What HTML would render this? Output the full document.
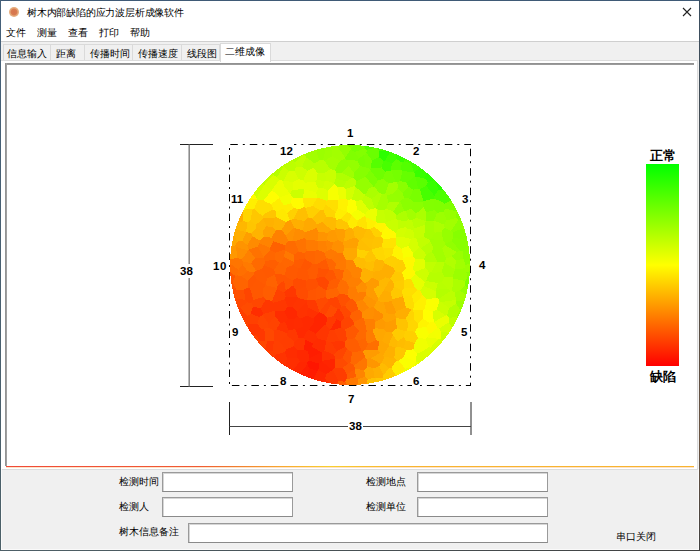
<!DOCTYPE html>
<html><head><meta charset="utf-8">
<style>
html,body{margin:0;padding:0;}
body{width:700px;height:551px;position:relative;overflow:hidden;background:#f0f0f0;font-family:"Liberation Sans",sans-serif;color:#000;}
.a{position:absolute;white-space:nowrap;}
.cj{font-size:10px;line-height:12px;}
.tab{position:absolute;top:44px;height:17px;background:#f0f0f0;border:1px solid #dadada;border-bottom:none;box-sizing:border-box;}
.inp{position:absolute;background:#fff;border:1px solid #9a9a9a;border-bottom-color:#8a8a8a;box-shadow:inset 1px 1px 0 #d6d6d6;box-sizing:border-box;height:20px;}
.num{position:absolute;font-weight:bold;font-size:11.5px;line-height:12px;white-space:nowrap;}
</style></head><body>
<div class="a" style="left:0;top:0;width:700px;height:41px;background:#fff;"></div>
<div class="a" style="left:9px;top:7px;width:10px;height:10px;border-radius:50%;background:radial-gradient(circle at 50% 50%,#d6744c 0,#d87a50 40%,#e4a878 55%,#e9b586 78%,#b88860 100%);"></div>
<div class="a cj" style="left:27px;top:7px;letter-spacing:-0.2px;">树木内部缺陷的应力波层析成像软件</div>
<svg class="a" style="left:682px;top:7px" width="10" height="10" viewBox="0 0 10 10"><path d="M1 1L9 9M9 1L1 9" stroke="#222" stroke-width="1.1"/></svg>
<div class="a cj" style="left:6px;top:27px;">文件</div>
<div class="a cj" style="left:37px;top:27px;">测量</div>
<div class="a cj" style="left:68px;top:27px;">查看</div>
<div class="a cj" style="left:99px;top:27px;">打印</div>
<div class="a cj" style="left:130px;top:27px;">帮助</div>
<div class="a" style="left:0;top:41px;width:700px;height:1px;background:#cfcfcf"></div>
<!-- tabs -->
<div class="tab" style="left:3px;width:48px;"></div>
<div class="tab" style="left:50px;width:35px;"></div>
<div class="tab" style="left:84px;width:49px;"></div>
<div class="tab" style="left:132px;width:50px;"></div>
<div class="tab" style="left:181px;width:39px;"></div>
<div class="a cj" style="left:7px;top:48px;">信息输入</div>
<div class="a cj" style="left:56px;top:48px;">距离</div>
<div class="a cj" style="left:90px;top:48px;">传播时间</div>
<div class="a cj" style="left:138px;top:48px;">传播速度</div>
<div class="a cj" style="left:187px;top:48px;">线段图</div>
<!-- tab page -->
<div class="a" style="left:1px;top:60px;width:697px;height:410px;background:#fff;border:1px solid #dcdcdc;border-left:none;box-sizing:border-box;"></div>
<div class="a" style="left:220px;top:43px;width:51px;height:19px;background:#fff;border:1px solid #dadada;border-bottom:none;box-sizing:border-box;"></div>
<div class="a cj" style="left:225px;top:46px;">二维成像</div>
<div class="a" style="left:5px;top:63px;width:689px;height:2px;background:linear-gradient(#8c8c8c,#a0a0a0);"></div>
<div class="a" style="left:5px;top:63px;width:2px;height:403px;background:linear-gradient(90deg,#8c8c8c,#a8a8a8);"></div>
<div class="a" style="left:6px;top:466px;width:688px;height:1px;background:linear-gradient(90deg,#f04a38 0%,#f05a34 28%,#f07a30 33%,#f8a830 40%,#f8d030 47%,#f8c030 52%,#f8b430 60%,#f8b430 100%);box-shadow:0 0.6px 0 rgba(248,150,48,.45);"></div>

<!-- chart -->
<svg class="a" style="left:0;top:0" width="700" height="551" viewBox="0 0 700 551">
<g shape-rendering="crispEdges">
<path fill="#8fff00" d="M323.8 149.7L324.8 147.7L323.7 147.9L320.8 148.6L319.8 148.9Z"/>
<path fill="#9eff00" d="M323.8 149.7L325.1 151.1L332.1 150.4L334.5 146.0L332.4 146.3L329.5 146.8L326.6 147.3L324.8 147.7Z"/>
<path fill="#94ff00" d="M345.2 157.6L350.6 149.9L350.6 148.4L347.1 145.0L347.1 145.0L344.1 145.1L341.2 145.3L338.2 145.6L336.7 145.8Z"/>
<path fill="#82ff00" d="M350.6 148.4L354.2 145.1L352.9 145.0L350.0 145.0L347.1 145.0Z"/>
<path fill="#77ff00" d="M365.4 148.5L364.0 145.8L361.8 145.6L358.8 145.3L355.9 145.1L354.2 145.1L350.6 148.4L350.6 149.9L354.8 151.9Z"/>
<path fill="#52ff00" d="M374.8 147.6L373.4 147.3L370.5 146.8L367.6 146.3L364.7 145.9L364.0 145.8L365.4 148.5L366.7 149.9Z"/>
<path fill="#47ff00" d="M379.4 151.1L385.9 150.5L384.8 150.2L382.0 149.3L379.2 148.6L376.7 148.0Z"/>
<path fill="#bbff00" d="M293.7 161.8L293.1 159.4L290.9 160.6L288.3 162.1Z"/>
<path fill="#adff00" d="M293.7 161.8L294.9 162.5L303.6 154.3L301.4 155.3L298.7 156.5L296.0 157.8L293.4 159.2L293.1 159.4Z"/>
<path fill="#a2ff00" d="M306.1 157.3L314.8 163.6L319.1 160.3L316.2 149.9L315.2 150.2L312.4 151.1L309.6 152.0L306.8 153.0L304.1 154.1Z"/>
<path fill="#9bff00" d="M319.1 160.3L323.0 160.2L325.1 151.1L323.8 149.7L319.8 148.9L318.0 149.3L316.2 149.9Z"/>
<path fill="#9fff00" d="M323.0 160.2L324.7 160.7L332.2 156.1L332.1 150.4L325.1 151.1Z"/>
<path fill="#a2ff00" d="M332.1 150.4L332.2 156.1L339.9 160.9L345.1 158.5L345.2 157.6L336.7 145.8L335.3 145.9L334.5 146.0Z"/>
<path fill="#80ff00" d="M346.9 160.0L357.6 160.7L358.8 158.5L354.8 151.9L350.6 149.9L345.2 157.6L345.1 158.5Z"/>
<path fill="#83ff00" d="M358.8 158.5L364.1 155.0L366.4 152.9L366.7 149.9L365.4 148.5L354.8 151.9Z"/>
<path fill="#6aff00" d="M379.0 157.2L379.4 151.1L376.7 148.0L376.3 147.9L374.8 147.6L366.7 149.9L366.4 152.9L372.0 160.4Z"/>
<path fill="#2cff00" d="M379.4 151.1L379.0 157.2L383.4 161.0L385.1 160.6L390.1 151.9L387.6 151.1L385.9 150.5Z"/>
<path fill="#40ff00" d="M396.7 159.3L395.4 153.9L393.2 153.0L390.4 152.0L390.1 151.9L385.1 160.6L391.6 163.3Z"/>
<path fill="#35ff00" d="M396.7 159.3L401.7 162.4L404.2 161.4L405.2 158.5L404.0 157.8L401.3 156.5L398.6 155.3L395.9 154.1L395.4 153.9Z"/>
<path fill="#49ff00" d="M404.2 161.4L410.7 163.2L411.6 162.0L409.1 160.6L406.6 159.2L405.2 158.5Z"/>
<path fill="#b5ff00" d="M283.3 165.2L283.3 165.2L280.9 166.9L278.5 168.6L276.2 170.4L273.9 172.2L272.5 173.4L273.8 175.2L277.1 177.0L283.6 166.2Z"/>
<path fill="#bcff00" d="M294.4 170.8L296.3 166.6L294.9 162.5L293.7 161.8L288.3 162.1L288.3 162.1L285.8 163.6L283.3 165.2L283.6 166.2L288.7 171.3Z"/>
<path fill="#c1ff00" d="M294.9 162.5L296.3 166.6L302.1 166.8L306.1 157.3L304.1 154.1L304.1 154.1L303.6 154.3Z"/>
<path fill="#b7ff00" d="M313.8 167.9L314.8 163.6L306.1 157.3L302.1 166.8L307.6 170.7Z"/>
<path fill="#b9ff00" d="M319.1 160.3L314.8 163.6L313.8 167.9L317.7 173.1L325.1 172.7L330.2 169.2L324.7 160.7L323.0 160.2Z"/>
<path fill="#a5ff00" d="M324.7 160.7L330.2 169.2L334.9 170.3L339.9 160.9L332.2 156.1Z"/>
<path fill="#92ff00" d="M339.9 160.9L334.9 170.3L336.4 172.9L341.8 173.1L348.4 165.9L346.9 160.0L345.1 158.5Z"/>
<path fill="#94ff00" d="M348.4 165.9L354.0 172.5L359.8 166.1L357.6 160.7L346.9 160.0Z"/>
<path fill="#7aff00" d="M359.8 166.1L365.5 167.3L364.1 155.0L358.8 158.5L357.6 160.7Z"/>
<path fill="#7dff00" d="M370.6 168.6L372.0 160.4L366.4 152.9L364.1 155.0L365.5 167.3L370.2 169.1Z"/>
<path fill="#55ff00" d="M381.5 167.4L383.4 161.0L379.0 157.2L372.0 160.4L370.6 168.6Z"/>
<path fill="#47ff00" d="M391.4 170.2L391.6 163.3L385.1 160.6L383.4 161.0L381.5 167.4L385.2 171.7L391.3 170.4Z"/>
<path fill="#5dff00" d="M401.7 162.4L396.7 159.3L391.6 163.3L391.4 170.2L401.2 169.5Z"/>
<path fill="#53ff00" d="M402.5 171.4L413.9 171.7L410.7 163.2L404.2 161.4L401.7 162.4L401.2 169.5Z"/>
<path fill="#43ff00" d="M420.4 167.8L419.1 166.9L416.7 165.2L414.2 163.6L411.7 162.1L411.6 162.0L410.7 163.2L413.9 171.7L414.3 172.0Z"/>
<path fill="#beff00" d="M264.5 184.6L265.4 183.0L265.2 180.1L265.1 180.1L263.1 182.3L262.0 183.4Z"/>
<path fill="#c4ff00" d="M272.5 173.4L271.6 174.1L269.4 176.1L267.3 178.1L265.2 180.1L265.4 183.0L273.8 175.2Z"/>
<path fill="#caff00" d="M283.6 180.5L288.7 171.3L283.6 166.2L277.1 177.0L279.4 179.9L283.0 180.8Z"/>
<path fill="#d8ff00" d="M292.7 182.1L298.3 179.1L294.4 170.8L288.7 171.3L283.6 180.5Z"/>
<path fill="#ceff00" d="M303.1 180.5L307.6 170.7L302.1 166.8L296.3 166.6L294.4 170.8L298.3 179.1Z"/>
<path fill="#dbff00" d="M304.7 182.7L315.2 181.8L316.8 179.6L317.7 173.1L313.8 167.9L307.6 170.7L303.1 180.5Z"/>
<path fill="#c7ff00" d="M325.1 172.7L317.7 173.1L316.8 179.6L324.8 181.3L326.1 180.8Z"/>
<path fill="#c9ff00" d="M335.8 178.5L336.4 172.9L334.9 170.3L330.2 169.2L325.1 172.7L326.1 180.8L334.1 183.1Z"/>
<path fill="#b0ff00" d="M341.8 173.1L336.4 172.9L335.8 178.5L346.5 181.4L351.8 177.8Z"/>
<path fill="#a0ff00" d="M354.0 172.5L348.4 165.9L341.8 173.1L351.8 177.8L353.4 177.6Z"/>
<path fill="#87ff00" d="M356.5 180.8L357.7 180.7L365.4 176.5L370.2 169.8L370.2 169.1L365.5 167.3L359.8 166.1L354.0 172.5L353.4 177.6Z"/>
<path fill="#7dff00" d="M365.4 176.5L373.4 186.6L374.3 186.5L378.0 180.3L370.2 169.8Z"/>
<path fill="#6fff00" d="M370.2 169.8L378.0 180.3L382.8 179.0L385.2 171.7L381.5 167.4L370.6 168.6L370.2 169.1Z"/>
<path fill="#79ff00" d="M391.3 170.4L385.2 171.7L382.8 179.0L388.9 183.3L395.5 182.1Z"/>
<path fill="#75ff00" d="M397.3 182.6L400.1 181.0L402.5 171.4L401.2 169.5L391.4 170.2L391.3 170.4L395.5 182.1Z"/>
<path fill="#65ff00" d="M406.6 182.6L415.0 176.1L414.3 172.0L413.9 171.7L402.5 171.4L400.1 181.0Z"/>
<path fill="#38ff00" d="M414.3 172.0L415.0 176.1L415.5 176.7L424.9 178.6L426.4 172.5L426.1 172.2L423.8 170.4L421.5 168.6L420.4 167.8Z"/>
<path fill="#30ff00" d="M424.9 178.6L428.0 182.1L434.8 180.1L432.7 178.1L430.6 176.1L428.4 174.1L426.4 172.5Z"/>
<path fill="#d1ff00" d="M256.5 197.7L264.5 184.8L264.5 184.6L262.0 183.4L261.1 184.4L259.1 186.6L257.2 188.9L255.4 191.2L253.6 193.5L253.4 193.8Z"/>
<path fill="#d8ff00" d="M277.1 177.0L273.8 175.2L265.4 183.0L264.5 184.6L264.5 184.8L271.9 189.8L279.4 179.9Z"/>
<path fill="#edff00" d="M284.0 186.7L283.0 180.8L279.4 179.9L271.9 189.8L271.9 190.3L278.0 195.0Z"/>
<path fill="#dfff00" d="M292.6 189.7L292.7 182.1L283.6 180.5L283.0 180.8L284.0 186.7L290.1 193.3Z"/>
<path fill="#e5ff00" d="M304.3 189.3L304.3 189.2L304.7 182.7L303.1 180.5L298.3 179.1L292.7 182.1L292.6 189.7Z"/>
<path fill="#e5ff00" d="M316.3 192.5L318.1 188.3L315.2 181.8L304.7 182.7L304.3 189.2Z"/>
<path fill="#cdff00" d="M324.8 181.3L316.8 179.6L315.2 181.8L318.1 188.3L322.8 188.0Z"/>
<path fill="#d2ff00" d="M328.0 190.8L334.3 184.2L334.1 183.1L326.1 180.8L324.8 181.3L322.8 188.0Z"/>
<path fill="#b5ff00" d="M346.5 181.4L335.8 178.5L334.1 183.1L334.3 184.2L337.3 186.7L343.5 186.6Z"/>
<path fill="#bcff00" d="M351.8 177.8L346.5 181.4L343.5 186.6L346.0 189.0L355.3 185.8L356.5 180.8L353.4 177.6Z"/>
<path fill="#95ff00" d="M356.5 180.8L355.3 185.8L355.5 187.0L365.1 194.9L369.0 188.5L357.7 180.7Z"/>
<path fill="#95ff00" d="M357.7 180.7L369.0 188.5L373.4 186.6L365.4 176.5Z"/>
<path fill="#8cff00" d="M388.9 183.3L382.8 179.0L378.0 180.3L374.3 186.5L379.1 192.8L381.8 194.1L385.2 194.2Z"/>
<path fill="#a3ff00" d="M388.9 183.3L385.2 194.2L386.4 195.1L393.0 194.1L397.9 188.0L397.3 182.6L395.5 182.1Z"/>
<path fill="#8aff00" d="M397.9 188.0L402.7 193.0L408.6 186.9L406.6 182.6L400.1 181.0L397.3 182.6Z"/>
<path fill="#60ff00" d="M413.1 189.9L418.0 188.4L415.5 176.7L415.0 176.1L406.6 182.6L408.6 186.9Z"/>
<path fill="#5aff00" d="M428.0 182.1L424.9 178.6L415.5 176.7L418.0 188.4L420.0 189.2L426.3 185.9Z"/>
<path fill="#38ff00" d="M438.4 190.2L435.8 181.1L434.9 180.1L434.8 180.1L428.0 182.1L426.3 185.9L434.5 195.8Z"/>
<path fill="#29ff00" d="M438.4 190.2L443.3 189.6L442.8 188.9L440.9 186.6L438.9 184.4L436.9 182.3L435.8 181.1Z"/>
<path fill="#fffc00" d="M257.1 199.5L256.5 197.7L253.4 193.8L251.9 195.9L250.2 198.3L249.5 199.4Z"/>
<path fill="#dcff00" d="M271.9 190.3L271.9 189.8L264.5 184.8L256.5 197.7L257.1 199.5L257.6 200.4L263.7 200.4Z"/>
<path fill="#fffe00" d="M271.9 190.3L263.7 200.4L266.5 202.3L271.2 204.1L279.2 198.0L279.2 197.4L278.0 195.0Z"/>
<path fill="#edff00" d="M284.0 186.7L278.0 195.0L279.2 197.4L290.1 193.9L290.1 193.3Z"/>
<path fill="#f2ff00" d="M279.2 197.4L279.2 198.0L284.0 205.7L290.3 203.2L292.7 197.5L290.1 193.9Z"/>
<path fill="#ccff00" d="M290.1 193.9L292.7 197.5L302.8 198.1L302.8 198.1L304.3 189.3L292.6 189.7L290.1 193.3Z"/>
<path fill="#eaff00" d="M316.3 192.5L304.3 189.2L304.3 189.3L302.8 198.1L317.1 197.6L317.3 197.5Z"/>
<path fill="#deff00" d="M327.8 199.8L328.0 190.8L322.8 188.0L318.1 188.3L316.3 192.5L317.3 197.5L326.4 200.8Z"/>
<path fill="#f7ff00" d="M338.2 200.0L339.2 199.3L337.3 186.7L334.3 184.2L328.0 190.8L327.8 199.8Z"/>
<path fill="#ecff00" d="M346.0 189.0L343.5 186.6L337.3 186.7L339.2 199.3L346.4 199.1Z"/>
<path fill="#d3ff00" d="M348.1 199.8L351.9 199.3L355.5 187.0L355.3 185.8L346.0 189.0L346.4 199.1Z"/>
<path fill="#c4ff00" d="M356.1 201.2L361.3 199.9L365.0 195.7L365.1 194.9L355.5 187.0L351.9 199.3Z"/>
<path fill="#abff00" d="M374.3 186.5L373.4 186.6L369.0 188.5L365.1 194.9L365.0 195.7L371.6 199.0L379.1 192.8Z"/>
<path fill="#b1ff00" d="M379.1 192.8L371.6 199.0L374.6 208.3L376.0 208.6L381.8 194.1Z"/>
<path fill="#96ff00" d="M388.5 202.5L399.6 202.1L400.3 201.7L400.7 200.9L393.0 194.1L386.4 195.1Z"/>
<path fill="#95ff00" d="M393.0 194.1L400.7 200.9L404.0 198.2L402.7 193.0L397.9 188.0Z"/>
<path fill="#7fff00" d="M409.5 198.5L413.1 189.9L408.6 186.9L402.7 193.0L404.0 198.2Z"/>
<path fill="#79ff00" d="M420.0 189.2L418.0 188.4L413.1 189.9L409.5 198.5L413.7 202.2L422.8 201.9L423.3 201.3Z"/>
<path fill="#46ff00" d="M426.3 185.9L420.0 189.2L423.3 201.3L434.1 198.5L434.5 195.8Z"/>
<path fill="#4eff00" d="M446.2 193.3L444.6 191.2L443.3 189.6L438.4 190.2L434.5 195.8L434.1 198.5L434.3 198.7L442.5 202.0Z"/>
<path fill="#4eff00" d="M442.5 202.0L444.6 203.8L451.2 200.6L449.8 198.3L448.1 195.9L446.4 193.5L446.2 193.3Z"/>
<path fill="#f2ff00" d="M246.4 209.3L245.7 205.6L245.6 205.9L244.2 208.4L243.5 209.8Z"/>
<path fill="#ffef00" d="M257.1 199.5L249.5 199.4L248.6 200.8L247.1 203.3L245.7 205.6L246.4 209.3L252.7 209.5L254.0 208.9L257.6 200.4Z"/>
<path fill="#ffde00" d="M263.7 200.4L257.6 200.4L254.0 208.9L262.5 216.2L265.6 213.0L266.5 202.3Z"/>
<path fill="#ffde00" d="M265.6 213.0L273.5 209.6L271.2 204.1L266.5 202.3Z"/>
<path fill="#ffed00" d="M271.2 204.1L273.5 209.6L276.1 211.8L283.2 208.5L284.0 205.7L279.2 198.0Z"/>
<path fill="#ffed00" d="M287.1 213.3L294.2 207.4L290.3 203.2L284.0 205.7L283.2 208.5Z"/>
<path fill="#fffb00" d="M302.8 198.1L292.7 197.5L290.3 203.2L294.2 207.4L298.3 209.4L304.1 207.2Z"/>
<path fill="#ffe500" d="M317.1 197.6L302.8 198.1L302.8 198.1L304.1 207.2L305.4 208.1L312.7 205.9Z"/>
<path fill="#ffdc00" d="M323.2 209.7L325.8 204.5L326.4 200.8L317.3 197.5L317.1 197.6L312.7 205.9L319.8 210.2Z"/>
<path fill="#ffdf00" d="M335.6 212.1L338.2 208.4L338.2 200.0L327.8 199.8L326.4 200.8L325.8 204.5Z"/>
<path fill="#fff200" d="M347.0 212.0L348.1 199.8L346.4 199.1L339.2 199.3L338.2 200.0L338.2 208.4Z"/>
<path fill="#fdff00" d="M356.9 209.4L356.1 201.2L351.9 199.3L348.1 199.8L347.0 212.0L347.1 212.2L351.3 214.1Z"/>
<path fill="#e0ff00" d="M365.0 214.1L369.0 209.8L361.3 199.9L356.1 201.2L356.9 209.4Z"/>
<path fill="#bfff00" d="M371.6 199.0L365.0 195.7L361.3 199.9L369.0 209.8L374.6 208.3Z"/>
<path fill="#a6ff00" d="M381.8 194.1L376.0 208.6L377.2 209.4L383.9 210.2L386.4 208.8L388.5 202.5L386.4 195.1L385.2 194.2Z"/>
<path fill="#afff00" d="M399.6 202.1L388.5 202.5L386.4 208.8L393.4 211.6Z"/>
<path fill="#96ff00" d="M396.3 215.3L404.3 210.7L400.3 201.7L399.6 202.1L393.4 211.6Z"/>
<path fill="#8bff00" d="M413.7 202.2L409.5 198.5L404.0 198.2L400.7 200.9L400.3 201.7L404.3 210.7L405.9 211.2L410.9 208.8Z"/>
<path fill="#8aff00" d="M423.4 207.3L422.8 201.9L413.7 202.2L410.9 208.8L415.9 213.8Z"/>
<path fill="#82ff00" d="M434.1 198.5L423.3 201.3L422.8 201.9L423.4 207.3L426.3 212.1L434.4 210.1L434.3 198.7Z"/>
<path fill="#81ff00" d="M434.3 198.7L434.4 210.1L437.2 212.8L443.5 211.7L445.1 208.5L444.6 203.8L442.5 202.0Z"/>
<path fill="#80ff00" d="M456.6 211.3L457.0 210.7L455.8 208.4L454.4 205.9L452.9 203.3L451.4 200.8L451.2 200.6L444.6 203.8L445.1 208.5Z"/>
<path fill="#ffad00" d="M243.5 221.0L242.9 211.0L242.8 211.0L241.5 213.7L240.3 216.4L239.1 219.1L238.0 221.8L237.6 223.0Z"/>
<path fill="#ffd500" d="M243.5 221.0L247.3 222.2L250.3 220.8L252.7 209.5L246.4 209.3L243.5 209.8L242.9 211.0Z"/>
<path fill="#ffc700" d="M254.0 208.9L252.7 209.5L250.3 220.8L256.0 224.8L262.9 218.6L263.1 217.8L262.5 216.2Z"/>
<path fill="#ffc500" d="M265.6 213.0L262.5 216.2L263.1 217.8L274.2 218.4L275.7 217.0L276.1 211.8L273.5 209.6Z"/>
<path fill="#ffe900" d="M276.1 211.8L275.7 217.0L286.1 222.1L289.8 220.2L287.1 213.3L283.2 208.5Z"/>
<path fill="#ffd100" d="M294.2 207.4L287.1 213.3L289.8 220.2L290.5 220.3L293.6 218.8L298.3 209.4Z"/>
<path fill="#ffbf00" d="M305.4 208.1L304.1 207.2L298.3 209.4L293.6 218.8L304.2 221.0L308.7 217.4Z"/>
<path fill="#ffcf00" d="M312.7 205.9L305.4 208.1L308.7 217.4L312.0 218.5L319.8 210.2Z"/>
<path fill="#ffbe00" d="M312.0 218.5L317.0 224.1L322.4 222.1L326.4 216.6L323.2 209.7L319.8 210.2Z"/>
<path fill="#ffd500" d="M326.4 216.6L334.9 217.7L335.6 212.1L325.8 204.5L323.2 209.7Z"/>
<path fill="#ffee00" d="M347.1 212.2L347.0 212.0L338.2 208.4L335.6 212.1L334.9 217.7L336.7 219.9L340.8 219.0Z"/>
<path fill="#ffe000" d="M347.5 222.9L352.0 215.7L351.3 214.1L347.1 212.2L340.8 219.0Z"/>
<path fill="#f6ff00" d="M357.8 220.7L364.7 215.9L365.0 214.1L356.9 209.4L351.3 214.1L352.0 215.7Z"/>
<path fill="#ebff00" d="M377.2 209.4L376.0 208.6L374.6 208.3L369.0 209.8L365.0 214.1L364.7 215.9L365.8 217.3L375.9 221.6Z"/>
<path fill="#c6ff00" d="M376.2 222.4L385.5 223.5L386.1 222.4L383.9 210.2L377.2 209.4L375.9 221.6Z"/>
<path fill="#c2ff00" d="M386.4 208.8L383.9 210.2L386.1 222.4L396.2 218.6L396.3 215.3L393.4 211.6Z"/>
<path fill="#adff00" d="M404.3 210.7L396.3 215.3L396.2 218.6L397.6 220.3L406.2 220.8L408.2 219.4L405.9 211.2Z"/>
<path fill="#a3ff00" d="M415.9 213.8L410.9 208.8L405.9 211.2L408.2 219.4L412.1 220.2L415.9 217.7Z"/>
<path fill="#abff00" d="M426.4 220.5L426.3 212.1L423.4 207.3L415.9 213.8L415.9 217.7L425.8 221.1Z"/>
<path fill="#8fff00" d="M433.7 220.6L437.2 212.8L434.4 210.1L426.3 212.1L426.4 220.5L433.4 220.7Z"/>
<path fill="#9cff00" d="M437.2 212.8L433.7 220.6L444.2 224.6L446.6 220.3L443.5 211.7Z"/>
<path fill="#97ff00" d="M446.6 220.3L456.4 217.8L456.6 211.3L445.1 208.5L443.5 211.7Z"/>
<path fill="#88ff00" d="M456.6 211.3L456.4 217.8L458.4 219.7L461.7 221.5L461.8 221.5L460.9 219.1L459.7 216.4L458.5 213.7L457.2 211.0L457.0 210.7Z"/>
<path fill="#ffb700" d="M247.3 222.2L243.5 221.0L237.6 223.0L237.0 224.6L236.1 227.4L235.5 229.1L246.1 232.2L246.2 232.1Z"/>
<path fill="#ffc500" d="M256.2 227.8L256.0 224.8L250.3 220.8L247.3 222.2L246.2 232.1L251.2 233.4Z"/>
<path fill="#ffb500" d="M256.0 224.8L256.2 227.8L262.7 230.8L266.5 226.3L262.9 218.6Z"/>
<path fill="#ffb100" d="M263.1 217.8L262.9 218.6L266.5 226.3L273.2 227.4L274.2 218.4Z"/>
<path fill="#ffb500" d="M286.1 222.1L275.7 217.0L274.2 218.4L273.2 227.4L275.6 230.5L281.6 230.1Z"/>
<path fill="#ff9c00" d="M285.8 235.3L294.3 227.5L290.5 220.3L289.8 220.2L286.1 222.1L281.6 230.1Z"/>
<path fill="#ffaf00" d="M290.5 220.3L294.3 227.5L295.3 228.4L303.2 230.2L304.2 221.0L293.6 218.8Z"/>
<path fill="#ffa900" d="M308.7 217.4L304.2 221.0L303.2 230.2L304.7 232.6L316.3 228.1L317.0 224.1L312.0 218.5Z"/>
<path fill="#ffa600" d="M317.0 224.1L316.3 228.1L318.6 232.3L328.0 232.6L331.4 229.9L322.4 222.1Z"/>
<path fill="#ffba00" d="M322.4 222.1L331.4 229.9L334.6 229.5L335.6 228.3L336.7 219.9L334.9 217.7L326.4 216.6Z"/>
<path fill="#ffc500" d="M336.7 219.9L335.6 228.3L345.7 229.7L349.8 227.8L347.5 222.9L340.8 219.0Z"/>
<path fill="#ffeb00" d="M356.9 225.6L357.8 220.7L352.0 215.7L347.5 222.9L349.8 227.8L352.9 228.7Z"/>
<path fill="#ffe300" d="M367.6 229.2L365.8 217.3L364.7 215.9L357.8 220.7L356.9 225.6L366.8 229.6Z"/>
<path fill="#fff000" d="M370.2 229.3L373.6 226.8L376.2 222.4L375.9 221.6L365.8 217.3L367.6 229.2Z"/>
<path fill="#fff500" d="M386.1 226.1L385.5 223.5L376.2 222.4L373.6 226.8L381.9 232.5Z"/>
<path fill="#c8ff00" d="M397.7 229.3L397.6 220.3L396.2 218.6L386.1 222.4L385.5 223.5L386.1 226.1L395.8 233.0Z"/>
<path fill="#c0ff00" d="M405.4 227.1L406.2 220.8L397.6 220.3L397.7 229.3Z"/>
<path fill="#c1ff00" d="M408.2 219.4L406.2 220.8L405.4 227.1L406.9 228.4L413.3 230.1L414.1 228.5L412.1 220.2Z"/>
<path fill="#b7ff00" d="M415.9 217.7L412.1 220.2L414.1 228.5L424.7 224.9L425.8 221.1Z"/>
<path fill="#a7ff00" d="M433.4 220.7L426.4 220.5L425.8 221.1L424.7 224.9L425.3 227.0L434.3 231.4Z"/>
<path fill="#adff00" d="M444.7 227.7L444.2 224.6L433.7 220.6L433.4 220.7L434.3 231.4L435.2 232.7L441.6 231.5Z"/>
<path fill="#a2ff00" d="M444.2 224.6L444.7 227.7L451.0 230.8L458.4 219.7L456.4 217.8L446.6 220.3Z"/>
<path fill="#90ff00" d="M452.7 232.4L462.0 228.7L461.7 221.5L458.4 219.7L451.0 230.8Z"/>
<path fill="#95ff00" d="M461.7 221.5L462.0 228.7L465.5 232.5L464.8 230.2L463.9 227.4L463.0 224.6L462.0 221.8L461.8 221.5Z"/>
<path fill="#ffae00" d="M235.5 229.1L235.2 230.2L234.3 233.0L234.3 233.3L234.1 235.2L237.5 241.5L242.4 240.8L246.1 232.2Z"/>
<path fill="#ff9e00" d="M251.2 233.4L246.2 232.1L246.1 232.2L242.4 240.8L247.2 245.0L252.8 236.3Z"/>
<path fill="#ffb300" d="M259.6 240.5L264.0 236.9L262.7 230.8L256.2 227.8L251.2 233.4L252.8 236.3Z"/>
<path fill="#ffa300" d="M273.2 227.4L266.5 226.3L262.7 230.8L264.0 236.9L271.7 237.7L275.6 230.5Z"/>
<path fill="#ff8100" d="M285.0 245.2L288.3 241.3L285.8 235.3L281.6 230.1L275.6 230.5L271.7 237.7L273.3 241.3Z"/>
<path fill="#ff9100" d="M288.3 241.3L292.4 240.9L295.3 228.4L294.3 227.5L285.8 235.3Z"/>
<path fill="#ff8c00" d="M295.3 228.4L292.4 240.9L294.7 241.3L304.2 238.2L304.7 232.6L303.2 230.2Z"/>
<path fill="#ff8900" d="M304.2 238.2L305.8 239.8L317.4 240.7L318.6 232.3L316.3 228.1L304.7 232.6Z"/>
<path fill="#ff9400" d="M327.0 240.3L328.0 232.6L318.6 232.3L317.4 240.7L318.0 241.4L325.5 241.1Z"/>
<path fill="#ff9a00" d="M334.6 229.5L331.4 229.9L328.0 232.6L327.0 240.3L333.1 242.4L338.2 239.9Z"/>
<path fill="#ff9e00" d="M334.6 229.5L338.2 239.9L343.1 242.4L343.9 241.7L345.7 229.7L335.6 228.3Z"/>
<path fill="#ffae00" d="M352.9 228.7L349.8 227.8L345.7 229.7L343.9 241.7L354.8 237.4Z"/>
<path fill="#ffba00" d="M360.7 239.7L363.0 237.6L366.8 229.6L356.9 225.6L352.9 228.7L354.8 237.4L359.0 240.1Z"/>
<path fill="#ffbf00" d="M372.9 239.5L374.9 236.9L370.2 229.3L367.6 229.2L366.8 229.6L363.0 237.6Z"/>
<path fill="#ffd100" d="M373.6 226.8L370.2 229.3L374.9 236.9L381.3 237.0L381.9 232.5Z"/>
<path fill="#fff900" d="M395.5 238.0L396.3 236.7L395.8 233.0L386.1 226.1L381.9 232.5L381.3 237.0L383.3 239.2Z"/>
<path fill="#d3ff00" d="M403.4 236.9L406.9 228.4L405.4 227.1L397.7 229.3L395.8 233.0L396.3 236.7Z"/>
<path fill="#d0ff00" d="M414.1 237.6L413.3 230.1L406.9 228.4L403.4 236.9L410.8 239.1Z"/>
<path fill="#c5ff00" d="M424.7 224.9L414.1 228.5L413.3 230.1L414.1 237.6L416.6 238.6L424.0 236.8L425.3 227.0Z"/>
<path fill="#a7ff00" d="M435.2 232.7L434.3 231.4L425.3 227.0L424.0 236.8L430.0 239.9L430.7 239.3Z"/>
<path fill="#a5ff00" d="M441.6 231.5L435.2 232.7L430.7 239.3L443.1 240.0Z"/>
<path fill="#96ff00" d="M445.4 243.7L451.6 240.5L453.5 237.6L452.7 232.4L451.0 230.8L444.7 227.7L441.6 231.5L443.1 240.0Z"/>
<path fill="#86ff00" d="M462.0 228.7L452.7 232.4L453.5 237.6L465.7 240.1L466.8 238.1L466.6 236.8L466.4 235.8L465.7 233.0L465.5 232.5Z"/>
<path fill="#ffa700" d="M235.3 245.9L237.5 241.5L234.1 235.2L233.7 235.4L233.6 235.8L232.9 238.7L232.3 241.6L231.8 244.5L231.5 246.3Z"/>
<path fill="#ff9400" d="M242.4 240.8L237.5 241.5L235.3 245.9L236.1 247.1L248.2 250.4L248.5 250.1L248.7 249.7L247.2 245.0Z"/>
<path fill="#ff8b00" d="M247.2 245.0L248.7 249.7L257.7 246.5L259.5 243.1L259.6 240.5L252.8 236.3Z"/>
<path fill="#ff7700" d="M269.9 248.1L259.5 243.1L257.7 246.5L263.8 257.1L270.0 250.2Z"/>
<path fill="#ff8300" d="M273.3 241.3L271.7 237.7L264.0 236.9L259.6 240.5L259.5 243.1L269.9 248.1Z"/>
<path fill="#ff6100" d="M275.5 252.6L284.7 249.7L285.0 245.2L273.3 241.3L269.9 248.1L270.0 250.2Z"/>
<path fill="#ff6b00" d="M284.7 249.7L285.2 250.8L293.5 254.7L298.9 251.7L294.7 241.3L292.4 240.9L288.3 241.3L285.0 245.2Z"/>
<path fill="#ff7300" d="M304.2 238.2L294.7 241.3L298.9 251.7L304.6 253.2L306.7 251.2L305.8 239.8Z"/>
<path fill="#ff7b00" d="M317.4 240.7L305.8 239.8L306.7 251.2L315.0 251.5L317.7 249.7L318.0 241.4Z"/>
<path fill="#ff8100" d="M318.0 241.4L317.7 249.7L324.8 253.0L327.3 250.6L325.5 241.1Z"/>
<path fill="#ff8600" d="M327.3 250.6L331.3 249.1L333.1 242.4L327.0 240.3L325.5 241.1Z"/>
<path fill="#ff8f00" d="M338.2 239.9L333.1 242.4L331.3 249.1L338.3 253.1L342.7 253.1L344.2 248.5L343.1 242.4Z"/>
<path fill="#ffa100" d="M354.8 237.4L343.9 241.7L343.1 242.4L344.2 248.5L356.8 248.2L359.0 240.1Z"/>
<path fill="#ffbe00" d="M356.8 248.2L357.2 249.1L368.8 251.3L371.5 249.7L371.6 249.4L360.7 239.7L359.0 240.1Z"/>
<path fill="#ffc100" d="M371.6 249.4L371.7 249.3L372.9 239.5L363.0 237.6L360.7 239.7Z"/>
<path fill="#ffc300" d="M383.3 239.2L381.3 237.0L374.9 236.9L372.9 239.5L371.7 249.3L381.8 246.7Z"/>
<path fill="#ffe300" d="M396.2 245.1L395.5 238.0L383.3 239.2L381.8 246.7L383.0 247.9L393.7 247.8Z"/>
<path fill="#dfff00" d="M401.6 248.6L408.3 245.9L410.8 239.1L403.4 236.9L396.3 236.7L395.5 238.0L396.2 245.1Z"/>
<path fill="#d5ff00" d="M416.6 238.6L414.1 237.6L410.8 239.1L408.3 245.9L413.2 253.1L418.9 247.2Z"/>
<path fill="#c2ff00" d="M421.0 248.1L430.3 241.8L430.0 239.9L424.0 236.8L416.6 238.6L418.9 247.2Z"/>
<path fill="#b8ff00" d="M426.4 254.6L431.9 251.4L433.6 248.8L430.3 241.8L421.0 248.1Z"/>
<path fill="#a2ff00" d="M430.7 239.3L430.0 239.9L430.3 241.8L433.6 248.8L442.2 248.6L444.9 245.1L445.4 243.7L443.1 240.0Z"/>
<path fill="#92ff00" d="M456.5 251.9L459.9 250.8L451.6 240.5L445.4 243.7L444.9 245.1Z"/>
<path fill="#89ff00" d="M462.8 251.0L465.7 248.6L465.7 240.1L453.5 237.6L451.6 240.5L459.9 250.8Z"/>
<path fill="#8cff00" d="M465.7 248.6L469.0 249.5L468.7 247.4L468.2 244.5L467.7 241.6L467.1 238.7L466.9 238.1L466.8 238.1L465.7 240.1Z"/>
<path fill="#ff9800" d="M237.2 257.8L236.1 247.1L235.3 245.9L231.5 246.3L231.3 247.4L230.9 250.3L230.6 253.2L230.3 256.2L230.1 259.1L230.1 259.2Z"/>
<path fill="#ff8e00" d="M248.2 250.4L236.1 247.1L237.2 257.8L241.9 259.3Z"/>
<path fill="#ff8000" d="M248.5 250.1L248.2 250.4L241.9 259.3L242.9 261.5L251.2 263.0L255.5 257.9Z"/>
<path fill="#ff7200" d="M257.7 246.5L248.7 249.7L248.5 250.1L255.5 257.9L263.7 258.0L263.8 257.1Z"/>
<path fill="#ff6600" d="M263.8 257.1L263.7 258.0L264.8 260.7L275.2 260.2L275.5 252.6L270.0 250.2Z"/>
<path fill="#ff6a00" d="M275.2 260.2L279.0 262.7L281.5 262.4L283.9 257.2L285.2 250.8L284.7 249.7L275.5 252.6Z"/>
<path fill="#ff7800" d="M293.5 254.7L285.2 250.8L283.9 257.2L293.7 261.7L294.2 260.5Z"/>
<path fill="#ff6100" d="M304.6 253.2L298.9 251.7L293.5 254.7L294.2 260.5L304.7 258.4Z"/>
<path fill="#ff6500" d="M305.0 259.2L312.8 263.8L315.2 263.6L315.0 251.5L306.7 251.2L304.6 253.2L304.7 258.4Z"/>
<path fill="#ff6800" d="M326.0 258.4L324.8 253.0L317.7 249.7L315.0 251.5L315.2 263.6L316.6 264.3L325.9 258.8Z"/>
<path fill="#ff7900" d="M324.8 253.0L326.0 258.4L331.0 258.7L338.3 253.1L331.3 249.1L327.3 250.6Z"/>
<path fill="#ff7800" d="M336.4 264.3L345.2 259.0L342.7 253.1L338.3 253.1L331.0 258.7Z"/>
<path fill="#ffa800" d="M344.2 248.5L342.7 253.1L345.2 259.0L346.1 259.6L352.9 260.1L356.7 256.9L357.2 249.1L356.8 248.2Z"/>
<path fill="#ffd100" d="M364.2 258.2L368.8 251.3L357.2 249.1L356.7 256.9Z"/>
<path fill="#ffc400" d="M368.8 251.3L364.2 258.2L365.9 262.2L374.7 260.9L376.5 259.2L371.5 249.7Z"/>
<path fill="#ffd700" d="M383.0 247.9L381.8 246.7L371.7 249.3L371.6 249.4L371.5 249.7L376.5 259.2L384.0 260.7L385.3 258.7Z"/>
<path fill="#ffdb00" d="M393.7 247.8L383.0 247.9L385.3 258.7L392.2 255.7Z"/>
<path fill="#fff400" d="M399.9 259.8L402.1 259.4L403.4 257.8L401.6 248.6L396.2 245.1L393.7 247.8L392.2 255.7Z"/>
<path fill="#f9ff00" d="M408.3 245.9L401.6 248.6L403.4 257.8L412.9 256.2L413.2 253.1Z"/>
<path fill="#ccff00" d="M413.2 253.1L412.9 256.2L415.4 258.6L424.1 259.2L426.4 254.6L421.0 248.1L418.9 247.2Z"/>
<path fill="#b2ff00" d="M425.3 261.7L436.1 262.5L437.5 261.8L431.9 251.4L426.4 254.6L424.1 259.2Z"/>
<path fill="#a2ff00" d="M444.4 262.6L445.9 258.5L442.2 248.6L433.6 248.8L431.9 251.4L437.5 261.8Z"/>
<path fill="#acff00" d="M442.2 248.6L445.9 258.5L451.5 256.4L456.5 251.9L444.9 245.1Z"/>
<path fill="#9aff00" d="M463.2 258.4L462.8 251.0L459.9 250.8L456.5 251.9L451.5 256.4L456.0 260.6Z"/>
<path fill="#8cff00" d="M465.7 248.6L462.8 251.0L463.2 258.4L465.6 265.0L470.0 263.7L470.0 262.1L469.9 259.1L469.7 256.2L469.4 253.2L469.1 250.3L469.0 249.5Z"/>
<path fill="#ff6c00" d="M235.4 276.3L237.0 275.3L238.5 269.7L230.0 263.5L230.0 265.0L230.0 267.9L230.1 270.9L230.2 271.4Z"/>
<path fill="#ff7500" d="M242.5 264.2L242.9 261.5L241.9 259.3L237.2 257.8L230.1 259.2L230.0 262.1L230.0 263.5L238.5 269.7Z"/>
<path fill="#ff7a00" d="M255.9 270.7L251.2 263.0L242.9 261.5L242.5 264.2L247.7 271.1L254.2 272.6Z"/>
<path fill="#ff6a00" d="M263.7 258.0L255.5 257.9L251.2 263.0L255.9 270.7L261.6 269.1L264.4 265.0L264.8 260.7Z"/>
<path fill="#ff5e00" d="M275.2 260.2L264.8 260.7L264.4 265.0L274.3 269.8L279.0 262.7Z"/>
<path fill="#ff6500" d="M274.3 269.8L275.4 273.9L285.1 274.8L286.4 267.6L281.5 262.4L279.0 262.7Z"/>
<path fill="#ff6600" d="M293.7 261.7L283.9 257.2L281.5 262.4L286.4 267.6L293.4 265.1Z"/>
<path fill="#ff5b00" d="M300.6 267.7L305.0 259.2L304.7 258.4L294.2 260.5L293.7 261.7L293.4 265.1L298.2 268.5Z"/>
<path fill="#ff5600" d="M307.3 270.7L312.8 263.8L305.0 259.2L300.6 267.7Z"/>
<path fill="#ff5a00" d="M316.6 264.3L318.3 268.2L329.3 269.5L325.9 258.8Z"/>
<path fill="#ff6700" d="M334.5 268.9L336.4 264.3L331.0 258.7L326.0 258.4L325.9 258.8L329.3 269.5L329.6 269.8L333.2 270.3Z"/>
<path fill="#ff7900" d="M346.1 259.6L345.2 259.0L336.4 264.3L334.5 268.9L343.8 270.0L345.7 268.1Z"/>
<path fill="#ff8300" d="M352.9 260.1L346.1 259.6L345.7 268.1L351.3 272.3L356.5 266.6Z"/>
<path fill="#ffbc00" d="M364.5 268.0L365.9 262.2L364.2 258.2L356.7 256.9L352.9 260.1L356.5 266.6L362.2 269.1Z"/>
<path fill="#ffbf00" d="M374.7 260.9L365.9 262.2L364.5 268.0L372.8 271.5Z"/>
<path fill="#ffb500" d="M374.7 260.9L372.8 271.5L373.0 271.8L381.7 270.2L384.7 263.2L384.0 260.7L376.5 259.2Z"/>
<path fill="#ffcf00" d="M385.3 258.7L384.0 260.7L384.7 263.2L394.0 268.1L399.9 259.8L392.2 255.7Z"/>
<path fill="#ffce00" d="M406.3 268.3L402.1 259.4L399.9 259.8L394.0 268.1L394.9 271.3L402.1 272.7Z"/>
<path fill="#fff800" d="M415.4 258.6L412.9 256.2L403.4 257.8L402.1 259.4L406.3 268.3L412.8 269.0Z"/>
<path fill="#e2ff00" d="M425.2 267.9L425.3 261.7L424.1 259.2L415.4 258.6L412.8 269.0L415.1 271.9Z"/>
<path fill="#c0ff00" d="M425.3 261.7L425.2 267.9L429.5 272.6L431.3 272.3L436.1 262.5Z"/>
<path fill="#b9ff00" d="M441.5 271.7L444.5 262.9L444.4 262.6L437.5 261.8L436.1 262.5L431.3 272.3L434.2 273.1Z"/>
<path fill="#b1ff00" d="M444.5 262.9L454.6 268.8L456.0 260.6L451.5 256.4L445.9 258.5L444.4 262.6Z"/>
<path fill="#a2ff00" d="M455.2 269.4L464.2 268.3L465.6 265.0L463.2 258.4L456.0 260.6L454.6 268.8Z"/>
<path fill="#9cff00" d="M466.2 272.1L469.8 271.2L469.9 270.9L470.0 267.9L470.0 265.0L470.0 263.7L465.6 265.0L464.2 268.3Z"/>
<path fill="#ff5500" d="M232.6 282.2L235.4 276.3L230.2 271.4L230.3 273.8L230.6 276.8L230.9 279.7L231.2 282.2Z"/>
<path fill="#ff6f00" d="M242.5 264.2L238.5 269.7L237.0 275.3L241.7 276.2L247.7 271.1Z"/>
<path fill="#ff6a00" d="M254.2 272.6L247.7 271.1L241.7 276.2L247.7 280.8L253.9 274.6Z"/>
<path fill="#ff5a00" d="M261.6 269.1L255.9 270.7L254.2 272.6L253.9 274.6L257.1 279.6L265.6 284.8L267.2 278.5Z"/>
<path fill="#ff5900" d="M261.6 269.1L267.2 278.5L274.7 274.8L275.4 273.9L274.3 269.8L264.4 265.0Z"/>
<path fill="#ff5500" d="M275.4 273.9L274.7 274.8L277.9 285.2L284.1 280.5L286.6 277.5L285.1 274.8Z"/>
<path fill="#ff5900" d="M293.4 265.1L286.4 267.6L285.1 274.8L286.6 277.5L292.8 280.2L296.5 278.2L298.2 268.5Z"/>
<path fill="#ff5700" d="M296.5 278.2L306.3 280.7L309.5 278.5L307.3 270.7L300.6 267.7L298.2 268.5Z"/>
<path fill="#ff5b00" d="M317.1 277.7L318.3 268.2L316.6 264.3L315.2 263.6L312.8 263.8L307.3 270.7L309.5 278.5L316.2 278.7Z"/>
<path fill="#ff5200" d="M329.3 269.5L318.3 268.2L317.1 277.7L324.6 276.9L329.6 269.8Z"/>
<path fill="#ff5600" d="M329.6 269.8L324.6 276.9L329.2 281.2L336.5 278.1L333.2 270.3Z"/>
<path fill="#ff6300" d="M336.5 278.1L340.3 280.4L342.2 280.1L343.8 270.0L334.5 268.9L333.2 270.3Z"/>
<path fill="#ff7c00" d="M345.7 268.1L343.8 270.0L342.2 280.1L346.4 281.3L351.7 277.1L351.3 272.3Z"/>
<path fill="#ff8300" d="M356.5 266.6L351.3 272.3L351.7 277.1L360.3 278.4L362.2 269.1Z"/>
<path fill="#ffb100" d="M373.0 271.8L372.8 271.5L364.5 268.0L362.2 269.1L360.3 278.4L362.3 281.4L365.6 283.1L372.5 277.6Z"/>
<path fill="#ffae00" d="M385.5 277.3L381.7 270.2L373.0 271.8L372.5 277.6L379.1 281.4Z"/>
<path fill="#ffae00" d="M394.0 268.1L384.7 263.2L381.7 270.2L385.5 277.3L390.3 278.8L394.9 271.3Z"/>
<path fill="#ffc900" d="M402.1 272.7L394.9 271.3L390.3 278.8L390.5 279.3L393.3 281.9L404.3 280.0L404.5 279.7Z"/>
<path fill="#fff800" d="M411.2 278.9L415.0 274.0L415.1 271.9L412.8 269.0L406.3 268.3L402.1 272.7L404.5 279.7Z"/>
<path fill="#ceff00" d="M424.9 281.9L426.0 281.0L429.5 272.6L425.2 267.9L415.1 271.9L415.0 274.0Z"/>
<path fill="#b6ff00" d="M434.2 273.1L431.3 272.3L429.5 272.6L426.0 281.0L437.6 283.0Z"/>
<path fill="#b6ff00" d="M441.8 281.9L444.6 277.1L441.5 271.7L434.2 273.1L437.6 283.0L437.7 283.1Z"/>
<path fill="#a8ff00" d="M452.4 277.3L455.2 269.4L454.6 268.8L444.5 262.9L441.5 271.7L444.6 277.1Z"/>
<path fill="#9bff00" d="M453.1 278.5L465.3 280.9L467.6 277.1L466.2 272.1L464.2 268.3L455.2 269.4L452.4 277.3Z"/>
<path fill="#8dff00" d="M466.2 272.1L467.6 277.1L469.4 277.3L469.4 276.8L469.7 273.8L469.8 271.2Z"/>
<path fill="#ff5500" d="M235.7 288.4L232.6 282.2L231.2 282.2L231.3 282.6L231.8 285.5L232.3 288.4L232.5 289.1Z"/>
<path fill="#ff6400" d="M241.7 276.2L237.0 275.3L235.4 276.3L232.6 282.2L235.7 288.4L236.4 289.5L243.7 289.5L247.8 287.7L247.7 280.8Z"/>
<path fill="#ff5700" d="M250.3 288.5L257.1 279.6L253.9 274.6L247.7 280.8L247.8 287.7L250.2 288.6Z"/>
<path fill="#ff5800" d="M265.6 285.0L265.6 284.8L257.1 279.6L250.3 288.5L262.9 289.1Z"/>
<path fill="#ff6200" d="M267.2 278.5L265.6 284.8L265.6 285.0L276.5 287.9L277.9 285.2L274.7 274.8Z"/>
<path fill="#ff4700" d="M276.5 287.9L276.9 288.8L284.3 292.6L285.8 290.8L284.1 280.5L277.9 285.2Z"/>
<path fill="#ff5500" d="M286.6 277.5L284.1 280.5L285.8 290.8L292.9 285.4L292.8 280.2Z"/>
<path fill="#ff4b00" d="M296.5 278.2L292.8 280.2L292.9 285.4L296.3 290.2L305.9 286.4L306.3 280.7Z"/>
<path fill="#ff5000" d="M309.5 278.5L306.3 280.7L305.9 286.4L308.1 291.3L316.0 288.4L318.8 285.6L316.2 278.7Z"/>
<path fill="#ff4700" d="M324.6 276.9L317.1 277.7L316.2 278.7L318.8 285.6L326.2 290.4L326.8 289.9L329.2 281.2Z"/>
<path fill="#ff5d00" d="M329.2 281.2L326.8 289.9L336.9 288.0L340.3 280.4L336.5 278.1Z"/>
<path fill="#ff6e00" d="M347.3 294.8L348.9 286.6L346.4 281.3L342.2 280.1L340.3 280.4L336.9 288.0L340.1 293.7Z"/>
<path fill="#ff7f00" d="M360.3 278.4L351.7 277.1L346.4 281.3L348.9 286.6L355.8 287.0L362.3 281.4Z"/>
<path fill="#ff8f00" d="M367.1 287.4L365.6 283.1L362.3 281.4L355.8 287.0L357.7 292.6L365.4 292.0Z"/>
<path fill="#ff9b00" d="M372.5 277.6L365.6 283.1L367.1 287.4L373.7 288.9L378.9 285.4L379.1 281.4Z"/>
<path fill="#ffb800" d="M390.3 278.8L385.5 277.3L379.1 281.4L378.9 285.4L383.9 289.7L390.5 279.3Z"/>
<path fill="#ffb000" d="M383.9 289.7L384.0 290.1L390.6 292.6L394.5 286.9L393.3 281.9L390.5 279.3Z"/>
<path fill="#ffcc00" d="M393.3 281.9L394.5 286.9L402.2 290.4L404.4 287.5L404.3 280.0Z"/>
<path fill="#ffdb00" d="M404.3 280.0L404.4 287.5L415.2 288.2L411.2 278.9L404.5 279.7Z"/>
<path fill="#e7ff00" d="M420.0 290.2L423.8 286.0L424.9 281.9L415.0 274.0L411.2 278.9L415.2 288.2L417.4 290.0Z"/>
<path fill="#cbff00" d="M437.7 283.1L437.6 283.0L426.0 281.0L424.9 281.9L423.8 286.0L435.6 291.0L436.2 289.8Z"/>
<path fill="#b8ff00" d="M447.4 288.5L441.8 281.9L437.7 283.1L436.2 289.8Z"/>
<path fill="#baff00" d="M450.7 290.9L452.3 290.8L453.1 278.5L452.4 277.3L444.6 277.1L441.8 281.9L447.4 288.5Z"/>
<path fill="#acff00" d="M452.3 290.8L454.7 292.4L460.0 290.1L465.1 285.9L465.3 280.9L453.1 278.5Z"/>
<path fill="#80ff00" d="M467.8 287.7L468.2 285.5L468.7 282.6L469.1 279.7L469.4 277.3L467.6 277.1L465.3 280.9L465.1 285.9Z"/>
<path fill="#ff4d00" d="M236.4 289.5L235.7 288.4L232.5 289.1L232.9 291.3L233.6 294.2L234.0 295.6Z"/>
<path fill="#ff4f00" d="M245.5 299.9L243.7 289.5L236.4 289.5L234.0 295.6L234.3 297.0L234.8 298.4Z"/>
<path fill="#ff4500" d="M247.8 287.7L243.7 289.5L245.5 299.9L247.4 302.4L251.3 302.8L253.3 299.9L250.2 288.6Z"/>
<path fill="#ff5800" d="M262.9 289.1L250.3 288.5L250.2 288.6L253.3 299.9L263.6 297.0Z"/>
<path fill="#ff5d00" d="M265.7 299.4L271.9 301.2L276.9 288.8L276.5 287.9L265.6 285.0L262.9 289.1L263.6 297.0Z"/>
<path fill="#ff4100" d="M284.6 299.3L285.7 296.8L284.3 292.6L276.9 288.8L271.9 301.2L273.4 302.8Z"/>
<path fill="#ff3700" d="M284.3 292.6L285.7 296.8L296.6 296.5L296.3 290.2L292.9 285.4L285.8 290.8Z"/>
<path fill="#ff4c00" d="M308.1 291.3L305.9 286.4L296.3 290.2L296.6 296.5L298.0 298.0L306.8 300.4L307.3 300.0Z"/>
<path fill="#ff5500" d="M315.3 300.1L316.0 299.7L316.0 288.4L308.1 291.3L307.3 300.0Z"/>
<path fill="#ff5700" d="M318.8 285.6L316.0 288.4L316.0 299.7L325.9 297.0L326.2 290.4Z"/>
<path fill="#ff6500" d="M336.9 288.0L326.8 289.9L326.2 290.4L325.9 297.0L327.6 298.9L336.9 297.0L340.1 293.7Z"/>
<path fill="#ff5000" d="M347.3 294.8L340.1 293.7L336.9 297.0L341.5 306.9L344.8 305.6L350.0 298.9Z"/>
<path fill="#ff7c00" d="M357.7 292.6L355.8 287.0L348.9 286.6L347.3 294.8L350.0 298.9L352.3 299.3Z"/>
<path fill="#ff7d00" d="M355.8 301.8L362.5 299.9L366.1 295.0L365.4 292.0L357.7 292.6L352.3 299.3Z"/>
<path fill="#ff9b00" d="M366.1 295.0L376.8 301.9L377.9 301.1L378.2 298.9L373.7 288.9L367.1 287.4L365.4 292.0Z"/>
<path fill="#ffb900" d="M383.9 289.7L378.9 285.4L373.7 288.9L378.2 298.9L384.0 290.1Z"/>
<path fill="#ffac00" d="M378.2 298.9L377.9 301.1L384.0 302.3L391.4 301.2L392.6 299.2L390.6 292.6L384.0 290.1Z"/>
<path fill="#ffc800" d="M394.5 286.9L390.6 292.6L392.6 299.2L402.8 296.4L402.2 290.4Z"/>
<path fill="#ffde00" d="M417.4 290.0L415.2 288.2L404.4 287.5L402.2 290.4L402.8 296.4L403.3 296.8L411.6 295.5Z"/>
<path fill="#ffeb00" d="M414.3 304.2L422.5 295.4L420.0 290.2L417.4 290.0L411.6 295.5Z"/>
<path fill="#d4ff00" d="M423.8 286.0L420.0 290.2L422.5 295.4L426.6 299.5L436.5 297.5L435.6 291.0Z"/>
<path fill="#b4ff00" d="M435.6 291.0L436.5 297.5L438.7 299.0L450.7 290.9L447.4 288.5L436.2 289.8Z"/>
<path fill="#bcff00" d="M439.4 301.0L441.8 302.1L456.0 299.8L454.7 292.4L452.3 290.8L450.7 290.9L438.7 299.0Z"/>
<path fill="#a7ff00" d="M456.6 300.9L461.3 300.7L465.2 298.4L465.7 297.0L466.0 295.8L460.0 290.1L454.7 292.4L456.0 299.8Z"/>
<path fill="#97ff00" d="M465.1 285.9L460.0 290.1L466.0 295.8L466.4 294.2L467.1 291.3L467.7 288.4L467.8 287.7Z"/>
<path fill="#ff4700" d="M240.4 307.9L247.4 302.4L245.5 299.9L234.8 298.4L235.2 299.8L236.1 302.6L237.0 305.4L237.8 307.7Z"/>
<path fill="#ff4b00" d="M247.4 302.4L240.4 307.9L247.3 316.0L250.6 313.8L253.0 306.6L251.3 302.8Z"/>
<path fill="#ff4700" d="M253.3 299.9L251.3 302.8L253.0 306.6L260.9 308.4L265.7 299.4L263.6 297.0Z"/>
<path fill="#ff3700" d="M271.9 301.2L265.7 299.4L260.9 308.4L263.3 314.1L274.6 310.9L273.4 302.8Z"/>
<path fill="#ff3700" d="M274.6 310.9L274.6 311.0L284.3 311.4L287.8 306.8L284.6 299.3L273.4 302.8Z"/>
<path fill="#ff3200" d="M292.3 306.9L298.0 298.0L296.6 296.5L285.7 296.8L284.6 299.3L287.8 306.8Z"/>
<path fill="#ff3400" d="M298.0 298.0L292.3 306.9L296.8 311.8L306.6 301.7L306.8 300.4Z"/>
<path fill="#ff3900" d="M318.3 312.9L319.6 312.2L319.6 311.8L315.3 300.1L307.3 300.0L306.8 300.4L306.6 301.7L308.0 307.5Z"/>
<path fill="#ff4a00" d="M328.1 300.8L327.6 298.9L325.9 297.0L316.0 299.7L315.3 300.1L319.6 311.8Z"/>
<path fill="#ff4400" d="M330.6 304.8L328.1 300.8L319.6 311.8L319.6 312.2L325.1 315.2Z"/>
<path fill="#ff4300" d="M341.5 306.9L336.9 297.0L327.6 298.9L328.1 300.8L330.6 304.8L337.7 309.1L339.4 308.7Z"/>
<path fill="#ff5800" d="M350.0 298.9L344.8 305.6L351.1 312.9L358.1 309.3L355.8 301.8L352.3 299.3Z"/>
<path fill="#ff8600" d="M358.1 309.3L362.2 312.0L369.1 307.8L362.5 299.9L355.8 301.8Z"/>
<path fill="#ff9500" d="M362.5 299.9L369.1 307.8L374.0 307.1L376.8 301.9L366.1 295.0Z"/>
<path fill="#ffa300" d="M376.8 301.9L374.0 307.1L374.6 308.6L383.3 314.7L386.5 313.4L384.0 302.3L377.9 301.1Z"/>
<path fill="#ff9c00" d="M386.5 313.4L395.0 313.9L395.9 311.6L391.4 301.2L384.0 302.3Z"/>
<path fill="#ffa800" d="M392.6 299.2L391.4 301.2L395.9 311.6L405.9 307.3L403.3 296.8L402.8 296.4Z"/>
<path fill="#ffdc00" d="M403.3 296.8L405.9 307.3L411.2 309.4L413.3 309.5L414.3 304.2L411.6 295.5Z"/>
<path fill="#fff000" d="M413.3 309.5L413.4 309.5L422.6 310.3L424.5 309.2L426.6 299.5L422.5 295.4L414.3 304.2Z"/>
<path fill="#fbff00" d="M426.6 299.5L424.5 309.2L432.8 311.9L436.8 309.5L439.4 301.0L438.7 299.0L436.5 297.5Z"/>
<path fill="#caff00" d="M439.4 301.0L436.8 309.5L445.8 315.4L447.2 315.6L448.9 308.5L441.8 302.1Z"/>
<path fill="#c6ff00" d="M448.9 308.5L456.2 303.5L456.6 300.9L456.0 299.8L441.8 302.1Z"/>
<path fill="#9eff00" d="M461.3 300.7L456.6 300.9L456.2 303.5L460.0 309.8L461.2 310.0L462.0 308.2L463.0 305.4L463.9 302.6L464.0 302.3Z"/>
<path fill="#a2ff00" d="M461.3 300.7L464.0 302.3L464.8 299.8L465.2 298.4Z"/>
<path fill="#ff3f00" d="M247.3 316.0L240.4 307.9L237.8 307.7L238.0 308.2L239.1 310.9L240.3 313.6L241.5 316.3L242.8 319.0L244.1 321.5L245.5 321.3Z"/>
<path fill="#ff4000" d="M257.3 323.7L259.7 317.0L250.6 313.8L247.3 316.0L245.5 321.3L247.7 324.0Z"/>
<path fill="#ff2d00" d="M253.0 306.6L250.6 313.8L259.7 317.0L262.8 315.1L263.3 314.1L260.9 308.4Z"/>
<path fill="#ff4100" d="M263.3 314.1L262.8 315.1L268.5 324.0L275.0 316.2L274.6 311.0L274.6 310.9Z"/>
<path fill="#ff2c00" d="M284.3 311.4L274.6 311.0L275.0 316.2L280.3 323.1L285.3 322.1L287.9 318.9Z"/>
<path fill="#ff2700" d="M297.6 316.9L296.8 311.8L292.3 306.9L287.8 306.8L284.3 311.4L287.9 318.9L294.2 318.7Z"/>
<path fill="#ff3200" d="M306.6 301.7L296.8 311.8L297.6 316.9L301.0 318.3L306.6 315.6L308.0 307.5Z"/>
<path fill="#ff3000" d="M306.6 315.6L313.5 318.3L318.3 312.9L308.0 307.5Z"/>
<path fill="#ff2400" d="M313.5 318.3L314.3 322.0L323.8 325.5L325.9 325.2L327.2 317.9L325.1 315.2L319.6 312.2L318.3 312.9Z"/>
<path fill="#ff4b00" d="M333.5 315.9L337.7 309.1L330.6 304.8L325.1 315.2L327.2 317.9Z"/>
<path fill="#ff3600" d="M337.7 309.1L333.5 315.9L336.6 319.2L341.1 321.8L344.4 317.6L339.4 308.7Z"/>
<path fill="#ff4800" d="M341.5 306.9L339.4 308.7L344.4 317.6L350.0 317.2L351.1 312.9L344.8 305.6Z"/>
<path fill="#ff6200" d="M350.0 317.2L353.9 322.3L362.4 317.5L362.2 312.0L358.1 309.3L351.1 312.9Z"/>
<path fill="#ff8e00" d="M374.6 308.6L374.0 307.1L369.1 307.8L362.2 312.0L362.4 317.5L364.1 319.0L373.1 318.5Z"/>
<path fill="#ff8b00" d="M382.4 318.5L383.3 314.7L374.6 308.6L373.1 318.5L375.5 321.9Z"/>
<path fill="#ffa300" d="M395.7 319.1L395.9 318.3L395.0 313.9L386.5 313.4L383.3 314.7L382.4 318.5L385.6 322.5Z"/>
<path fill="#ffae00" d="M405.9 307.3L395.9 311.6L395.0 313.9L395.9 318.3L405.5 318.9L411.2 309.4Z"/>
<path fill="#ffd400" d="M413.3 309.5L411.2 309.4L405.5 318.9L407.9 322.1L414.0 319.3L413.4 309.5Z"/>
<path fill="#ffe300" d="M413.4 309.5L414.0 319.3L417.8 323.5L423.2 318.8L422.6 310.3Z"/>
<path fill="#ffff00" d="M423.2 318.8L429.2 322.7L433.8 321.9L432.8 311.9L424.5 309.2L422.6 310.3Z"/>
<path fill="#d6ff00" d="M433.8 321.9L434.0 322.0L445.8 315.4L436.8 309.5L432.8 311.9Z"/>
<path fill="#b2ff00" d="M456.5 316.8L460.0 309.8L456.2 303.5L448.9 308.5L447.2 315.6L449.2 318.0Z"/>
<path fill="#9dff00" d="M460.0 309.8L456.5 316.8L457.7 317.9L458.5 316.3L459.7 313.6L460.9 310.9L461.2 310.0Z"/>
<path fill="#ff4700" d="M247.7 324.0L245.5 321.3L244.1 321.5L244.2 321.6L245.6 324.1L247.1 326.7L247.9 328.0Z"/>
<path fill="#ff3600" d="M252.6 335.0L256.0 335.1L261.2 328.8L257.3 323.7L247.7 324.0L247.9 328.0L248.6 329.2L250.2 331.7L251.9 334.1L252.5 334.9Z"/>
<path fill="#ff4500" d="M268.5 324.0L262.8 315.1L259.7 317.0L257.3 323.7L261.2 328.8L264.4 328.8L268.4 327.6Z"/>
<path fill="#ff4300" d="M273.7 330.7L276.2 329.2L280.3 323.1L275.0 316.2L268.5 324.0L268.4 327.6Z"/>
<path fill="#ff3300" d="M288.7 330.5L285.3 322.1L280.3 323.1L276.2 329.2L287.2 333.2Z"/>
<path fill="#ff2a00" d="M287.9 318.9L285.3 322.1L288.7 330.5L294.2 329.1L294.2 318.7Z"/>
<path fill="#ff2b00" d="M303.6 326.2L301.0 318.3L297.6 316.9L294.2 318.7L294.2 329.1L295.6 329.7Z"/>
<path fill="#ff2900" d="M301.0 318.3L303.6 326.2L308.0 329.7L308.9 329.6L314.3 322.0L313.5 318.3L306.6 315.6Z"/>
<path fill="#ff2400" d="M314.3 322.0L308.9 329.6L315.9 334.0L323.8 325.5Z"/>
<path fill="#ff3a00" d="M330.1 329.5L330.4 329.5L336.6 319.2L333.5 315.9L327.2 317.9L325.9 325.2Z"/>
<path fill="#ff2800" d="M330.4 329.5L333.6 329.8L341.5 327.3L341.1 321.8L336.6 319.2Z"/>
<path fill="#ff4400" d="M341.1 321.8L341.5 327.3L345.3 329.6L353.5 324.9L353.9 322.3L350.0 317.2L344.4 317.6Z"/>
<path fill="#ff6900" d="M364.1 319.0L362.4 317.5L353.9 322.3L353.5 324.9L359.0 330.7L366.7 330.4Z"/>
<path fill="#ff7f00" d="M366.8 330.5L372.5 330.2L375.1 328.1L375.5 321.9L373.1 318.5L364.1 319.0L366.7 330.4Z"/>
<path fill="#ff9a00" d="M384.1 329.4L385.6 322.5L382.4 318.5L375.5 321.9L375.1 328.1Z"/>
<path fill="#ff9d00" d="M384.1 329.4L386.4 331.6L392.1 332.0L397.0 328.2L395.7 319.1L385.6 322.5Z"/>
<path fill="#ffc300" d="M407.9 322.1L405.5 318.9L395.9 318.3L395.7 319.1L397.0 328.2L405.1 331.3L407.3 330.5Z"/>
<path fill="#ffd600" d="M417.8 323.5L414.0 319.3L407.9 322.1L407.3 330.5L415.0 331.9L417.5 327.9Z"/>
<path fill="#fff400" d="M426.1 327.2L429.2 322.7L423.2 318.8L417.8 323.5L417.5 327.9Z"/>
<path fill="#fff900" d="M428.8 334.2L433.1 331.6L437.5 327.6L434.0 322.0L433.8 321.9L429.2 322.7L426.1 327.2Z"/>
<path fill="#ebff00" d="M447.2 315.6L445.8 315.4L434.0 322.0L437.5 327.6L439.4 328.4L448.6 322.5L449.2 318.0Z"/>
<path fill="#d6ff00" d="M439.4 328.4L441.2 331.8L449.0 332.8L449.8 331.7L451.4 329.2L452.3 327.8L448.6 322.5Z"/>
<path fill="#beff00" d="M456.5 316.8L449.2 318.0L448.6 322.5L452.3 327.8L452.9 326.7L454.4 324.1L455.8 321.6L457.2 319.0L457.7 317.9Z"/>
<path fill="#ff3800" d="M261.2 328.8L256.0 335.1L260.2 341.1L265.0 340.9L264.4 328.8Z"/>
<path fill="#ff4800" d="M264.4 328.8L265.0 340.9L267.0 341.5L273.9 340.7L274.3 340.3L273.7 330.7L268.4 327.6Z"/>
<path fill="#ff3e00" d="M274.3 340.3L279.0 341.3L287.3 335.5L287.2 333.2L276.2 329.2L273.7 330.7Z"/>
<path fill="#ff3700" d="M295.6 329.7L294.2 329.1L288.7 330.5L287.2 333.2L287.3 335.5L294.4 342.1L298.7 338.4Z"/>
<path fill="#ff2900" d="M308.0 329.7L303.6 326.2L295.6 329.7L298.7 338.4L303.6 337.6Z"/>
<path fill="#ff2e00" d="M315.9 334.0L308.9 329.6L308.0 329.7L303.6 337.6L305.2 339.6L312.6 343.1L317.6 338.4Z"/>
<path fill="#ff3500" d="M323.8 325.5L315.9 334.0L317.6 338.4L326.2 341.0L330.1 329.5L325.9 325.2Z"/>
<path fill="#ff3d00" d="M326.2 341.0L326.3 341.2L331.1 342.2L339.7 340.6L333.6 329.8L330.4 329.5L330.1 329.5Z"/>
<path fill="#ff4000" d="M341.5 327.3L333.6 329.8L339.7 340.6L345.0 342.1L346.9 339.3L345.3 329.6Z"/>
<path fill="#ff5800" d="M345.3 329.6L346.9 339.3L354.9 338.2L359.0 330.7L353.5 324.9Z"/>
<path fill="#ff6900" d="M359.0 330.7L354.9 338.2L357.3 340.4L365.6 338.2L366.8 330.5L366.7 330.4Z"/>
<path fill="#ff7c00" d="M365.6 338.2L367.8 343.8L376.3 340.1L372.5 330.2L366.8 330.5Z"/>
<path fill="#ffa700" d="M372.5 330.2L376.3 340.1L379.3 341.8L381.8 341.1L386.4 331.6L384.1 329.4L375.1 328.1Z"/>
<path fill="#ffaa00" d="M392.1 332.0L386.4 331.6L381.8 341.1L388.7 344.7L392.7 335.2Z"/>
<path fill="#ffcb00" d="M403.9 337.1L405.1 331.3L397.0 328.2L392.1 332.0L392.7 335.2L397.7 341.1Z"/>
<path fill="#ffcf00" d="M407.3 330.5L405.1 331.3L403.9 337.1L405.4 340.3L414.7 343.0L418.1 337.6L415.0 331.9Z"/>
<path fill="#f9ff00" d="M415.0 331.9L418.1 337.6L425.5 339.1L427.2 337.4L428.8 334.2L426.1 327.2L417.5 327.9Z"/>
<path fill="#f3ff00" d="M437.1 338.6L433.1 331.6L428.8 334.2L427.2 337.4Z"/>
<path fill="#f4ff00" d="M438.4 339.2L440.9 338.9L441.2 331.8L439.4 328.4L437.5 327.6L433.1 331.6L437.1 338.6Z"/>
<path fill="#cbff00" d="M441.2 331.8L440.9 338.9L442.9 341.0L444.6 338.8L446.4 336.5L448.1 334.1L449.0 332.8Z"/>
<path fill="#ff4200" d="M260.2 341.1L256.0 335.1L252.6 335.0L252.6 335.1L253.6 336.5L255.4 338.8L257.2 341.1L259.1 343.3Z"/>
<path fill="#ff4700" d="M267.0 341.5L265.0 340.9L260.2 341.1L259.1 343.3L259.1 343.4L261.1 345.6L263.1 347.7L265.1 349.8Z"/>
<path fill="#ff3800" d="M265.1 349.8L265.1 349.9L266.3 351.0L272.9 350.6L273.9 340.7L267.0 341.5Z"/>
<path fill="#ff3f00" d="M273.9 340.7L272.9 350.6L275.3 354.8L284.8 352.0L286.0 349.5L279.0 341.3L274.3 340.3Z"/>
<path fill="#ff3d00" d="M279.0 341.3L286.0 349.5L293.7 346.2L294.4 342.1L287.3 335.5Z"/>
<path fill="#ff3400" d="M298.7 338.4L294.4 342.1L293.7 346.2L297.4 350.0L303.9 349.6L305.2 339.6L303.6 337.6Z"/>
<path fill="#ff1d00" d="M303.9 349.6L308.1 351.3L312.4 347.3L312.6 343.1L305.2 339.6Z"/>
<path fill="#ff2c00" d="M326.3 341.2L326.2 341.0L317.6 338.4L312.6 343.1L312.4 347.3L321.9 352.3L322.5 352.3L324.4 350.8Z"/>
<path fill="#ff3b00" d="M334.1 354.8L336.8 351.4L331.1 342.2L326.3 341.2L324.4 350.8Z"/>
<path fill="#ff3600" d="M345.0 342.1L339.7 340.6L331.1 342.2L336.8 351.4L345.3 346.8Z"/>
<path fill="#ff5d00" d="M352.2 352.3L361.7 351.1L357.3 340.4L354.9 338.2L346.9 339.3L345.0 342.1L345.3 346.8L347.1 349.1Z"/>
<path fill="#ff6600" d="M357.3 340.4L361.7 351.1L363.2 351.7L365.5 349.5L367.8 343.8L365.6 338.2Z"/>
<path fill="#ff6f00" d="M376.3 340.1L367.8 343.8L365.5 349.5L377.9 349.5L379.3 341.8Z"/>
<path fill="#ffa600" d="M377.9 349.5L379.8 352.9L383.2 355.0L389.2 345.6L388.7 344.7L381.8 341.1L379.3 341.8Z"/>
<path fill="#ffb900" d="M396.9 346.7L397.7 341.1L392.7 335.2L388.7 344.7L389.2 345.6L395.4 347.6Z"/>
<path fill="#ffbc00" d="M396.9 346.7L403.9 348.0L405.4 340.3L403.9 337.1L397.7 341.1Z"/>
<path fill="#ffbf00" d="M414.7 343.0L405.4 340.3L403.9 348.0L406.3 350.1L413.4 349.4Z"/>
<path fill="#f0ff00" d="M414.7 343.0L413.4 349.4L416.8 353.3L421.6 352.1L428.9 346.9L425.5 339.1L418.1 337.6Z"/>
<path fill="#eaff00" d="M425.5 339.1L428.9 346.9L430.4 347.7L438.4 339.2L437.1 338.6L427.2 337.4Z"/>
<path fill="#d8ff00" d="M433.8 350.9L434.9 349.9L436.9 347.7L438.9 345.6L440.9 343.4L442.8 341.1L442.9 341.0L440.9 338.9L438.4 339.2L430.4 347.7Z"/>
<path fill="#ff3e00" d="M275.3 354.8L272.9 350.6L266.3 351.0L267.3 351.9L269.4 353.9L271.6 355.9L273.9 357.8L274.2 358.0Z"/>
<path fill="#ff3300" d="M285.5 364.9L287.0 358.3L284.8 352.0L275.3 354.8L274.2 358.0L276.2 359.6L278.5 361.4L280.9 363.1L282.7 364.3Z"/>
<path fill="#ff2c00" d="M297.3 357.5L297.4 350.0L293.7 346.2L286.0 349.5L284.8 352.0L287.0 358.3Z"/>
<path fill="#ff2800" d="M308.8 360.7L309.2 358.6L308.1 351.3L303.9 349.6L297.4 350.0L297.3 357.5L299.8 361.6L307.2 362.2Z"/>
<path fill="#ff1d00" d="M321.9 352.3L312.4 347.3L308.1 351.3L309.2 358.6Z"/>
<path fill="#ff2000" d="M321.9 352.3L309.2 358.6L308.8 360.7L319.2 363.5L322.1 361.6L322.4 360.8L322.5 352.3Z"/>
<path fill="#ff3000" d="M322.5 352.3L322.4 360.8L335.1 358.6L334.1 354.8L324.4 350.8Z"/>
<path fill="#ff4500" d="M335.4 359.4L342.7 358.2L347.1 349.1L345.3 346.8L336.8 351.4L334.1 354.8L335.1 358.6Z"/>
<path fill="#ff5300" d="M342.7 358.2L347.9 363.5L350.4 362.9L352.2 352.3L347.1 349.1Z"/>
<path fill="#ff6800" d="M354.0 365.4L365.1 357.2L363.2 351.7L361.7 351.1L352.2 352.3L350.4 362.9Z"/>
<path fill="#ff9b00" d="M365.5 349.5L363.2 351.7L365.1 357.2L366.4 358.6L371.1 358.3L379.8 352.9L377.9 349.5Z"/>
<path fill="#ffa700" d="M384.3 357.1L383.2 355.0L379.8 352.9L371.1 358.3L380.5 363.7L382.1 362.4Z"/>
<path fill="#ffb000" d="M389.2 345.6L383.2 355.0L384.3 357.1L394.3 358.0L395.4 347.6Z"/>
<path fill="#ffc600" d="M394.3 358.0L396.6 360.4L399.0 360.9L403.8 356.4L406.3 350.1L403.9 348.0L396.9 346.7L395.4 347.6Z"/>
<path fill="#fdff00" d="M413.4 349.4L406.3 350.1L403.8 356.4L415.8 361.9L416.0 361.6L416.8 353.3Z"/>
<path fill="#dbff00" d="M416.0 361.6L421.0 361.7L421.5 361.4L423.8 359.6L426.1 357.8L426.5 357.5L421.6 352.1L416.8 353.3Z"/>
<path fill="#dcff00" d="M426.5 357.5L428.4 355.9L430.6 353.9L432.7 351.9L433.8 350.9L430.4 347.7L428.9 346.9L421.6 352.1Z"/>
<path fill="#ff2a00" d="M286.8 367.0L285.5 364.9L282.7 364.3L283.3 364.8L285.8 366.4L286.8 367.0Z"/>
<path fill="#ff2e00" d="M292.7 370.3L299.8 361.6L297.3 357.5L287.0 358.3L285.5 364.9L286.8 367.0L287.0 367.1L288.3 367.9L290.9 369.4L291.8 370.0Z"/>
<path fill="#ff2600" d="M307.5 364.0L307.2 362.2L299.8 361.6L292.7 370.3L292.8 370.5L293.4 370.8L296.0 372.2L298.7 373.5L299.7 373.9Z"/>
<path fill="#ff1600" d="M307.5 364.0L308.9 368.0L317.3 370.8L318.4 370.1L319.2 363.5L308.8 360.7L307.2 362.2Z"/>
<path fill="#ff2200" d="M322.1 361.6L319.2 363.5L318.4 370.1L326.5 374.2L332.5 370.1Z"/>
<path fill="#ff2500" d="M322.1 361.6L332.5 370.1L333.0 370.0L335.2 367.7L335.4 359.4L335.1 358.6L322.4 360.8Z"/>
<path fill="#ff4a00" d="M347.9 363.5L342.7 358.2L335.4 359.4L335.2 367.7L342.9 367.9Z"/>
<path fill="#ff5800" d="M355.0 369.5L355.3 368.8L354.0 365.4L350.4 362.9L347.9 363.5L342.9 367.9L346.8 374.1Z"/>
<path fill="#ff7600" d="M355.3 368.8L364.4 370.2L367.6 366.3L366.4 358.6L365.1 357.2L354.0 365.4Z"/>
<path fill="#ff9600" d="M371.1 358.3L366.4 358.6L367.6 366.3L373.2 368.5L379.2 366.1L380.5 363.7Z"/>
<path fill="#ffbb00" d="M389.3 368.3L382.1 362.4L380.5 363.7L379.2 366.1L383.3 375.1Z"/>
<path fill="#ffb300" d="M391.3 368.1L396.6 360.4L394.3 358.0L384.3 357.1L382.1 362.4L389.3 368.3Z"/>
<path fill="#ffed00" d="M399.0 360.9L396.6 360.4L391.3 368.1L396.0 375.8L396.9 375.5L403.5 370.9L405.0 368.6Z"/>
<path fill="#faff00" d="M411.6 368.0L411.7 367.9L414.2 366.4L414.4 366.3L415.8 361.9L403.8 356.4L399.0 360.9L405.0 368.6Z"/>
<path fill="#ecff00" d="M416.0 361.6L415.8 361.9L414.4 366.3L416.7 364.8L419.1 363.1L421.0 361.7Z"/>
<path fill="#ff1e00" d="M308.9 368.0L307.5 364.0L299.7 373.9L301.4 374.7L304.1 375.9L306.8 377.0L307.4 377.2Z"/>
<path fill="#ff1b00" d="M307.4 377.2L309.6 378.0L310.6 378.3L314.0 378.4L317.3 370.8L308.9 368.0Z"/>
<path fill="#ff2600" d="M325.0 378.3L326.5 374.2L318.4 370.1L317.3 370.8L314.0 378.4L316.0 380.1L317.5 380.5Z"/>
<path fill="#ff3700" d="M338.7 381.3L333.0 370.0L332.5 370.1L326.5 374.2L325.0 378.3L326.0 380.2L329.8 383.3L332.4 383.7L335.3 384.1L336.0 384.2Z"/>
<path fill="#ff3c00" d="M346.8 374.1L342.9 367.9L335.2 367.7L333.0 370.0L338.7 381.3L345.2 381.6L346.5 379.4Z"/>
<path fill="#ff5d00" d="M355.9 377.1L355.0 369.5L346.8 374.1L346.5 379.4Z"/>
<path fill="#ff8500" d="M355.0 369.5L355.9 377.1L358.5 379.1L364.8 376.9L364.4 370.2L355.3 368.8Z"/>
<path fill="#ffa900" d="M364.8 376.9L367.6 379.0L374.6 377.8L373.2 368.5L367.6 366.3L364.4 370.2Z"/>
<path fill="#ffaf00" d="M379.2 366.1L373.2 368.5L374.6 377.8L376.0 378.5L383.0 378.1L383.3 375.1Z"/>
<path fill="#ffcc00" d="M383.0 378.1L384.8 379.8L384.8 379.8L387.6 378.9L390.4 378.0L393.2 377.0L395.9 375.9L396.0 375.8L391.3 368.1L389.3 368.3L383.3 375.1Z"/>
<path fill="#f7ff00" d="M403.5 370.9L396.9 375.5L398.6 374.7L401.3 373.5L404.0 372.2L404.0 372.2Z"/>
<path fill="#ebff00" d="M405.0 368.6L403.5 370.9L404.0 372.2L406.6 370.8L409.1 369.4L411.6 368.0Z"/>
<path fill="#ff1c00" d="M314.0 378.4L310.6 378.3L312.4 378.9L315.2 379.8L316.0 380.1Z"/>
<path fill="#ff2700" d="M317.5 380.5L318.0 380.7L320.8 381.4L323.7 382.1L325.1 382.4L326.0 380.2L325.0 378.3Z"/>
<path fill="#ff2c00" d="M326.0 380.2L325.1 382.4L326.6 382.7L329.5 383.2L329.8 383.3Z"/>
<path fill="#ff5c00" d="M345.2 381.6L338.7 381.3L336.0 384.2L338.2 384.4L341.2 384.7L344.1 384.9L347.1 385.0L347.3 385.0Z"/>
<path fill="#ff7900" d="M358.5 379.1L355.9 377.1L346.5 379.4L345.2 381.6L347.3 385.0L350.0 385.0L352.9 385.0L355.9 384.9L357.4 384.8Z"/>
<path fill="#ff9400" d="M367.6 379.0L364.8 376.9L358.5 379.1L357.4 384.8L358.8 384.7L361.8 384.4L364.7 384.1L367.1 383.8Z"/>
<path fill="#ffc100" d="M367.6 379.0L367.1 383.8L367.6 383.7L370.5 383.2L373.4 382.7L375.4 382.3L376.0 378.5L374.6 377.8Z"/>
<path fill="#ffc600" d="M375.4 382.3L376.3 382.1L379.2 381.4L382.0 380.7L384.8 379.8L383.0 378.1L376.0 378.5Z"/>
</g>
<g fill="none" stroke="#000" stroke-width="1">
<line x1="229.5" y1="144.5" x2="471" y2="144.5" stroke-dasharray="7.5 5 2 5" stroke-dashoffset="18.7"/>
<line x1="229.5" y1="385.5" x2="471" y2="385.5" stroke-dasharray="7.5 5 2 5" stroke-dashoffset="17.1"/>
<line x1="229.5" y1="144.5" x2="229.5" y2="386" stroke-dasharray="7.5 5 2 5" stroke-dashoffset="9"/>
<line x1="470.5" y1="144.5" x2="470.5" y2="386" stroke-dasharray="7.5 5 2 5" stroke-dashoffset="15.3"/>
<line x1="180" y1="144.5" x2="213" y2="144.5" stroke="#222"/>
<line x1="180" y1="386.5" x2="213" y2="386.5" stroke="#222"/>
<line x1="189.2" y1="144.5" x2="189.2" y2="386.5" stroke="#858585" stroke-width="1.5"/>
<line x1="229.5" y1="402" x2="229.5" y2="435" stroke="#222"/>
<line x1="471" y1="402" x2="471" y2="435" stroke="#222"/>
<line x1="229.5" y1="426.5" x2="471" y2="426.5" stroke="#444"/>
</g>
</svg>
<div class="a" style="left:646px;top:164px;width:33px;height:202px;background:linear-gradient(#00ff00,#ffff00 50%,#ff0000);"></div>
<div class="a" style="left:650px;top:149px;font:bold 12.5px/14px 'Liberation Serif',serif;">正常</div>
<div class="a" style="left:650px;top:370px;font:bold 12.5px/14px 'Liberation Serif',serif;">缺陷</div>
<div class="num" style="left:346px;top:127px;background:#fff;padding:0 1px">1</div>
<div class="num" style="left:279px;top:142px;background:#fff;padding:3px 1px 2px 1px">12</div>
<div class="num" style="left:412px;top:145px;background:#fff;padding:0 1px">2</div>
<div class="num" style="left:461px;top:193px;background:#fff;padding:0 1px">3</div>
<div class="num" style="left:478px;top:259px;background:#fff;padding:0 1px">4</div>
<div class="num" style="left:460px;top:326px;background:#fff;padding:0 1px">5</div>
<div class="num" style="left:412px;top:375px;background:#fff;padding:0 1px">6</div>
<div class="num" style="left:347px;top:393px;background:#fff;padding:0 1px">7</div>
<div class="num" style="left:279px;top:375px;background:#fff;padding:0 4px 0 1px">8</div>
<div class="num" style="left:231px;top:326px;background:#fff;padding:0 1px">9</div>
<div class="num" style="left:212px;top:260px;background:#fff;padding:0 1px;letter-spacing:0.5px">10</div>
<div class="num" style="left:230px;top:193px;background:#fff;padding:0 1px">11</div>
<div class="num" style="left:179px;top:264px;background:#fff;padding:1px 1px 1px 1px">38</div>
<div class="num" style="left:348px;top:420px;background:#fff;padding:0 1px">38</div>


<!-- bottom form -->
<div class="a cj" style="left:119px;top:476px;">检测时间</div>
<div class="inp" style="left:162px;top:472px;width:131px;"></div>
<div class="a cj" style="left:119px;top:501px;">检测人</div>
<div class="inp" style="left:162px;top:497px;width:131px;"></div>
<div class="a cj" style="left:119px;top:526px;">树木信息备注</div>
<div class="inp" style="left:188px;top:523px;width:360px;"></div>
<div class="a cj" style="left:366px;top:476px;">检测地点</div>
<div class="inp" style="left:417px;top:472px;width:131px;"></div>
<div class="a cj" style="left:366px;top:501px;">检测单位</div>
<div class="inp" style="left:417px;top:497px;width:131px;"></div>
<div class="a cj" style="left:616px;top:531px;">串口关闭</div>

<!-- window borders -->
<div class="a" style="left:1px;top:469px;width:1px;height:81px;background:#fafafa"></div>
<div class="a" style="left:1px;top:549px;width:698px;height:1px;background:#fafafa"></div>
<div class="a" style="left:698px;top:469px;width:1px;height:81px;background:#fafafa"></div>
<div class="a" style="left:0;top:0;width:700px;height:1px;background:#3f5a76"></div>
<div class="a" style="left:0;top:0;width:1px;height:551px;background:linear-gradient(#45607a,#4c6068);"></div>
<div class="a" style="left:699px;top:0;width:1px;height:551px;background:linear-gradient(#3a4e60,#4a4a48 40%,#6a5442 80%,#404040);"></div>
<div class="a" style="left:0;top:550px;width:700px;height:1px;background:linear-gradient(90deg,#4e6068,#404040);"></div>
</body></html>
